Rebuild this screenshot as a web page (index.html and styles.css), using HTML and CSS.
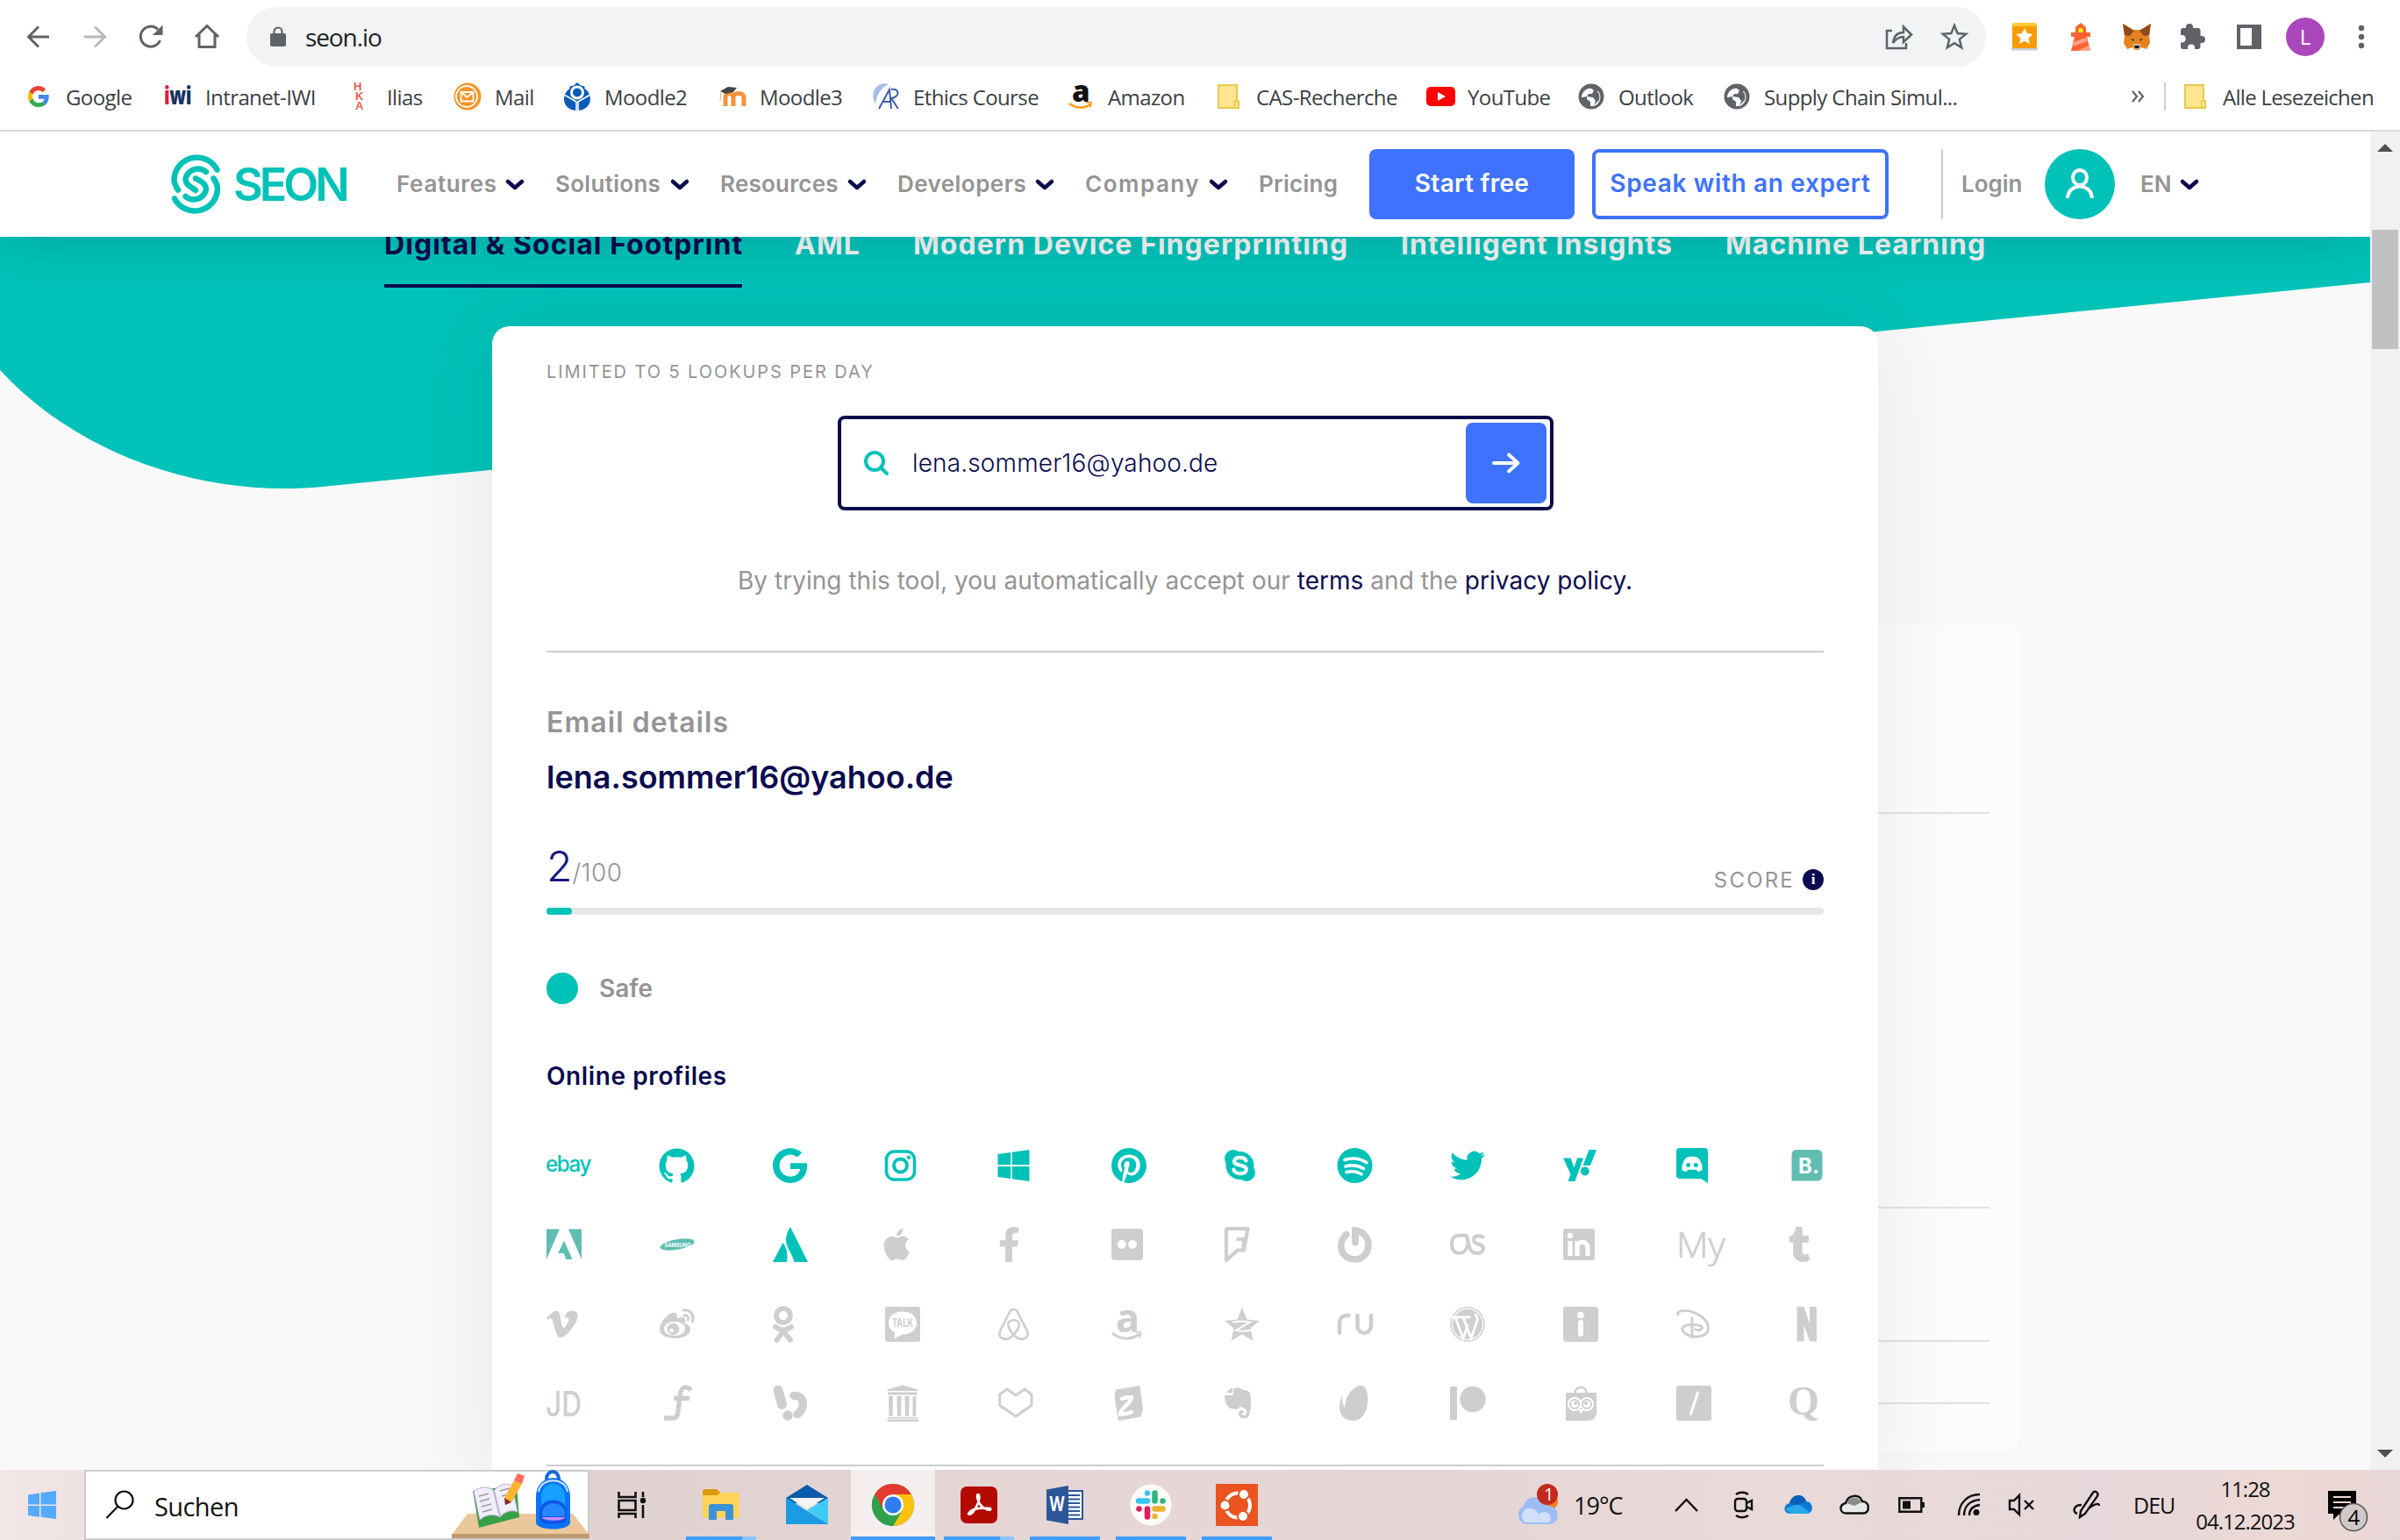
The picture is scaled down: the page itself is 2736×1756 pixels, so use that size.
FILE: index.html
```html
<!DOCTYPE html>
<html lang="de">
<head>
<meta charset="utf-8">
<title>SEON</title>
<link rel="stylesheet" href="styles.css">
</head>
<body>
<div class="toolbar">
  <svg class="ic" width="32" height="32" viewBox="0 0 32 32"><path d="M28 16H5M16 4.500 4.500 16 16 27.500" class="ln3"/></svg>
  <svg class="ic faded" width="32" height="32" viewBox="0 0 32 32"><path d="M4 16h23M16 4.500 27.500 16 16 27.500" class="ln3"/></svg>
  <svg class="ic" width="32" height="32" viewBox="0 0 32 32"><path d="M26.500 20A11.500 11.500 0 1 1 24 7.500" class="ln3"/><path d="M29.500 2.500V14H18z"/></svg>
  <svg class="ic" width="32" height="32" viewBox="0 0 32 32"><path d="M3 16 16 3.500 29 16M7 13v14.500h18V13" class="ln3"/></svg>
  <div class="omnibox">
    <svg width="18" height="24" viewBox="0 0 18 24" class="lock"><rect y="8" width="18" height="15" rx="2"/><path d="M4.500 9V6a4.500 4.500 0 0 1 9 0v3" fill="none" stroke="#5f6368" stroke-width="2.200"/></svg>
    <span class="url">seon.io</span>
    <svg class="share" width="32" height="32" viewBox="0 0 32 32"><path d="M8 9H2v20h22v-6" class="ln25"/><path d="M9 23c1-8 5-12 12-12V4.500l9 9-9 8.500v-6c-5 0-8 1.500-12 7z" class="ln25"/></svg>
    <svg width="32" height="32" viewBox="0 0 32 32"><path d="m16 3 3.600 9 9.600.7-7.400 6.200 2.400 9.400L16 23.200l-8.200 5.100 2.400-9.400-7.400-6.200 9.600-.7z" class="ln25"/></svg>
  </div>
  <div class="ext"><svg width="32" height="32" viewBox="0 0 32 32"><rect x="1" y="28" width="30" height="3.500" rx="1" fill="#c9ccd6"/><rect x="2" width="28" height="29" rx="3" fill="#f99b00"/><rect x="2" width="28" height="4" rx="2" fill="#ffc93c"/><path d="m16 6 2.900 6.100 6.600.8-4.900 4.600 1.300 6.500-5.900-3.200L10.100 24l1.300-6.500-4.900-4.600 6.600-.8z" fill="#fff"/></svg></div>
  <div class="ext"><svg width="32" height="32" viewBox="0 0 32 32"><path d="M10 11V5l6-5 6 5v6h5v5H5v-5zM9 16h14l4 16H5z" fill="#ff6333"/><path d="M13.500 6h5v5h-5z" fill="#fff200"/><path d="m8 22 14-5 1.500 4L7 27zm4 10 13-6 1.500 6z" fill="#ffa287"/></svg></div>
  <div class="ext"><svg width="34" height="32" viewBox="0 0 34 32"><path d="m1 1 12 7h8l12-7-2 14 1 8-4 7-6-2-3 3h-4l-3-3-6 2-4-7 1-8z" fill="#e8821e"/><path d="m1 1 13 8-5 6-6-1zM33 1 20 9l5 6 6-1z" fill="#8f4a1c"/><path d="m10 18 4 1-1 2zM24 18l-4 1 1 2z" fill="#233447"/><path d="m12 25 3 5h4l3-5-3-1h-4z" fill="#d5bfb2"/><path d="M14 26h6l-1 3h-4z" fill="#161616"/></svg></div>
  <div class="ext"><svg width="30" height="30" viewBox="0 0 30 30" class="ic"><path d="M25 14h-1.500V8a3 3 0 0 0-3-3H15V4a4 4 0 0 0-8 0v1H4a3 3 0 0 0-3 3v5h1.500a4 4 0 0 1 0 8.500H1V26a3 3 0 0 0 3 3h5v-1.500a4 4 0 0 1 8 0V29h3.500a3 3 0 0 0 3-3v-4H25a4 4 0 0 0 0-8z"/></svg></div>
  <div class="ext"><svg width="28" height="28" viewBox="0 0 28 28" class="ic"><path d="M0 0h28v28H0zM4 4v20h13V4z" fill-rule="evenodd"/></svg></div>
  <div class="ext"><span class="avatar">L</span></div>
  <div class="ext"><svg width="8" height="28" viewBox="0 0 8 28" class="ic"><circle cx="4" cy="4" r="3.200"/><circle cx="4" cy="14" r="3.200"/><circle cx="4" cy="24" r="3.200"/></svg></div>
</div>
<div class="bookmarks">
  <div class="bm"><svg width="32" height="32" viewBox="0 0 48 48"><path fill="#EA4335" d="M24 14c2.700 0 5.100.9 7 2.700l5.300-5.200C33 8.400 28.900 6 24 6c-7 0-13.100 4-16.100 9.900l6.100 4.700C15.500 17 19.400 14 24 14z"/><path fill="#4285F4" d="M41.500 24.400c0-1.200-.1-2.300-.3-3.400H24v7h9.900c-.4 2.100-1.700 4-3.600 5.300l5.900 4.600c3.400-3.200 5.300-7.900 5.300-13.500z"/><path fill="#FBBC05" d="M14 27.400a10.600 10.600 0 0 1 0-6.800l-6.100-4.700a18 18 0 0 0 0 16.200z"/><path fill="#34A853" d="M24 42c4.900 0 9-1.600 12.200-4.100l-5.900-4.600A11 11 0 0 1 14 27.400l-6.100 4.700A18 18 0 0 0 24 42z"/></svg><span>Google</span></div>
  <div class="bm"><svg width="32" height="32" viewBox="0 0 32 32"><text x="0" y="25" class="iwi" textLength="31" lengthAdjust="spacingAndGlyphs"><tspan fill="#e6173f">i</tspan><tspan fill="#17335f">wi</tspan></text></svg><span>Intranet-IWI</span></div>
  <div class="bm"><svg width="32" height="32" viewBox="0 0 32 32"><g class="hka"><text x="9" y="9">H</text><text x="11" y="20">K</text><text x="11" y="31">A</text></g></svg><span>Ilias</span></div>
  <div class="bm"><svg width="32" height="32" viewBox="0 0 32 32"><circle cx="16" cy="16" r="15.500" fill="#f59322"/><circle cx="15" cy="16" r="12" fill="none" stroke="#fff" stroke-width="1.800"/><path d="M8.500 11h14v10.500h-14zM8.500 11l7 6 7-6" fill="none" stroke="#fff" stroke-width="1.800"/></svg><span>Mail</span></div>
  <div class="bm"><svg width="32" height="32" viewBox="0 0 32 32"><path d="M16 0 20 3.500l4.500 1V7C35 14 33 32 16 32S-3 14 7.500 7V4.500l4.500-1z" fill="#0a5bb8"/><path d="M2 14.500 15 22v10M30 14.500 17 22v10" fill="none" stroke="#fff" stroke-width="1.600"/><circle cx="16" cy="11.500" r="6.500" fill="none" stroke="#fff" stroke-width="3"/></svg><span>Moodle2</span></div>
  <div class="bm"><svg width="32" height="32" viewBox="0 0 32 32"><path d="M8 27V17c0-6 9-6 9 0v10M17 17c0-6 12-6 12 0v10" fill="none" stroke="#f7923a" stroke-width="5"/><path d="m2 10 9-5 10 1-4 5-9 2z" fill="#444"/><path d="m3 10-1 11" stroke="#e0a98a" stroke-width="1"/></svg><span>Moodle3</span></div>
  <div class="bm"><svg width="32" height="32" viewBox="0 0 32 32"><path d="M4 24C-4 10 8-2 19 2 9 7 6 14 4 24z" fill="#a3bfe6"/><path d="M8 30 20 8l2 22M12 22h10M22 8c10-2 10 9 0 10l8 12" fill="none" stroke="#3c5da6" stroke-width="2"/></svg><span>Ethics Course</span></div>
  <div class="bm"><svg width="32" height="32" viewBox="0 0 32 32"><text x="6" y="22" class="ama">a</text><path d="M3 24c8 6 17 6 24 1" fill="none" stroke="#f90" stroke-width="2.500"/><path d="m22 23 6-.5-1 6" fill="none" stroke="#f90" stroke-width="1.500"/></svg><span>Amazon</span></div>
  <div class="bm"><svg width="32" height="32" viewBox="0 0 32 32"><path d="M4 3h21v18h2v8H4z" fill="#ffe591" stroke="#ebc84a" stroke-width="2"/><path d="M22.500 28v-7h3" fill="none" stroke="#ebc84a" stroke-width="1.500"/></svg><span>CAS-Recherche</span></div>
  <div class="bm"><svg width="34" height="32" viewBox="0 0 34 32"><rect y="5" width="33" height="22" rx="5" fill="#f00"/><path d="m13 11 9 5-9 5z" fill="#fff"/></svg><span class="yt">YouTube</span></div>
  <div class="bm"><svg width="32" height="32" viewBox="0 0 32 32"><circle cx="16" cy="16" r="14.500" fill="#5f6368"/><path d="M5 17c0-6 6-11 11-10l3 2-2 4h-4l-2 3 7 1 3 4-2 5 6-6c1-4 0-9-3-10l2 0c5 6 2 15-5 17h-4v-5l-4-3v-3z" fill="#fff"/></svg><span>Outlook</span></div>
  <div class="bm"><svg width="32" height="32" viewBox="0 0 32 32"><circle cx="16" cy="16" r="14.500" fill="#5f6368"/><path d="M5 17c0-6 6-11 11-10l3 2-2 4h-4l-2 3 7 1 3 4-2 5 6-6c1-4 0-9-3-10l2 0c5 6 2 15-5 17h-4v-5l-4-3v-3z" fill="#fff"/></svg><span>Supply Chain Simul...</span></div>
  <div class="more"><svg width="16" height="14" viewBox="0 0 16 14"><path d="m2 1 5 6-5 6M9 1l5 6-5 6" fill="none" stroke="#5f6368" stroke-width="2.200"/></svg></div>
  <div class="bm all"><svg width="32" height="32" viewBox="0 0 32 32"><path d="M4 3h21v18h2v8H4z" fill="#ffe591" stroke="#ebc84a" stroke-width="2"/><path d="M22.500 28v-7h3" fill="none" stroke="#ebc84a" stroke-width="1.500"/></svg><span>Alle Lesezeichen</span></div>
</div>
<div class="browser">
  <div class="page">
    <header class="nav">
      <div class="logo">
        <svg width="58" height="70" viewBox="0 0 58 70"><g fill="none" stroke="#00c2b8" stroke-width="6.500" stroke-linecap="round"><path d="M52.500 18.500A26 26 0 0 0 3.500 29c0 5 2 9 4.500 12.500"/><path d="M4 51.500A26 26 0 0 0 53 41c0-5-2-9-4.500-12.500"/><path d="M40 21A14.500 14.500 0 0 0 16.500 29c0 5 3 7.500 6.500 9.500L28 42"/><path d="M16.500 49A14.500 14.500 0 0 0 40 41c0-5-3-7.500-6.500-9.500L28 28.500"/></g></svg>
        <span>SEON</span>
      </div>
      <a class="menu m1">Features<svg width="22" height="13" viewBox="0 0 22 13"><path d="m3 3 8 7 8-7"/></svg></a>
      <a class="menu m2">Solutions<svg width="22" height="13" viewBox="0 0 22 13"><path d="m3 3 8 7 8-7"/></svg></a>
      <a class="menu m3">Resources<svg width="22" height="13" viewBox="0 0 22 13"><path d="m3 3 8 7 8-7"/></svg></a>
      <a class="menu m4">Developers<svg width="22" height="13" viewBox="0 0 22 13"><path d="m3 3 8 7 8-7"/></svg></a>
      <a class="menu m5">Company<svg width="22" height="13" viewBox="0 0 22 13"><path d="m3 3 8 7 8-7"/></svg></a>
      <a class="menu m6">Pricing</a>
      <a class="btn solid">Start free</a>
      <a class="btn outline">Speak with an expert</a>
      <i class="sep"></i>
      <a class="menu login">Login</a>
      <span class="user"><svg width="34" height="36" viewBox="0 0 34 36"><g fill="none" stroke="#fff" stroke-width="4"><ellipse cx="17" cy="10.500" rx="8" ry="8.500"/><path d="M3 34c1-18 27-18 28 0"/></g></svg></span>
      <a class="menu lang">EN<svg width="22" height="13" viewBox="0 0 22 13"><path d="m3 3 8 7 8-7"/></svg></a>
    </header>
    <main class="stage">
      <svg class="wave" width="2702" height="300" viewBox="0 0 2702 300"><path d="M0 0H2702V52L367 285C235 298 90 250 0 152z" fill="#00c2b8"/></svg>
      <div class="ghost"><i></i><i></i><i></i><i></i></div>
      <nav class="tabs"><a class="on">Digital &amp; Social Footprint</a><a class="t2">AML</a><a class="t3">Modern Device Fingerprinting</a><a class="t4">Intelligent Insights</a><a class="t5">Machine Learning</a></nav>
      <section class="card">
        <p class="limit">LIMITED TO 5 LOOKUPS PER DAY</p>
        <div class="field">
          <svg width="28" height="28" viewBox="0 0 28 28"><g fill="none" stroke="#00c2b8" stroke-width="4" stroke-linecap="round"><circle cx="12" cy="12" r="10"/><path d="m19.500 19.500 6.500 6.500"/></g></svg>
          <span>lena.sommer16@yahoo.de</span>
          <b class="go"><svg width="32" height="24" viewBox="0 0 32 24"><path d="M2 12h27M19 2.500 29.500 12 19 21.500" fill="none" stroke="#fff" stroke-width="3.800" stroke-linecap="round" stroke-linejoin="round"/></svg></b>
        </div>
        <p class="terms">By trying this tool, you automatically accept our <a>terms</a> and the <a>privacy policy.</a></p>
        <div class="rule"></div>
        <h2>Email details</h2>
        <p class="mail">lena.sommer16@yahoo.de</p>
        <div class="score"><p><b>2</b><span>/100</span></p><div class="lbl">SCORE<i>i</i></div></div>
        <div class="bar"><div class="fill" style="width:2%"></div></div>
        <div class="safe"><i></i><span>Safe</span></div>
        <h3>Online profiles</h3>
        <div class="profiles">
          <!-- row 1 -->
          <svg class="a"><text x="-1" y="31" class="eb" textLength="51" lengthAdjust="spacingAndGlyphs">ebay</text></svg>
          <svg class="a"><g transform="translate(-.5 4) scale(1.667)"><path d="M12 .297c-6.630 0-12 5.373-12 12 0 5.303 3.438 9.800 8.205 11.385.6.113.82-.258.82-.577 0-.285-.01-1.040-.015-2.040-3.338.724-4.042-1.610-4.042-1.610C4.422 18.070 3.633 17.700 3.633 17.700c-1.087-.744.084-.729.084-.729 1.205.084 1.838 1.236 1.838 1.236 1.070 1.835 2.809 1.305 3.495.998.108-.776.417-1.305.76-1.605-2.665-.3-5.466-1.332-5.466-5.930 0-1.310.465-2.380 1.235-3.220-.135-.303-.54-1.523.105-3.176 0 0 1.005-.322 3.300 1.230.96-.267 1.980-.399 3-.405 1.020.006 2.040.138 3 .405 2.280-1.552 3.285-1.230 3.285-1.230.645 1.653.24 2.873.12 3.176.765.84 1.230 1.910 1.230 3.220 0 4.610-2.805 5.625-5.475 5.920.42.36.81 1.096.81 2.220 0 1.606-.015 2.896-.015 3.286 0 .315.21.69.825.57C20.565 22.092 24 17.592 24 12.297c0-6.627-5.373-12-12-12"/></g></svg>
          <svg class="a"><g transform="translate(0 3.500) scale(.0803)"><path d="M488 261.800C488 403.300 391.100 504 248 504 110.800 504 0 393.200 0 256S110.800 8 248 8c66.800 0 123 24.500 166.300 64.900l-67.500 64.900C258.500 52.600 94.300 116.600 94.300 256c0 86.500 69.100 156.600 153.700 156.600 98.200 0 135-70.400 140.800-106.900H248v-85.300h236.100c2.300 12.700 3.900 24.900 3.900 41.400z"/></g></svg>
          <svg class="a"><rect x="1.500" y="8" width="32" height="32" rx="9" class="s" stroke-width="3.500"/><circle cx="17.500" cy="24" r="7.500" class="s" stroke-width="3.800"/><circle cx="27" cy="14.700" r="2.200"/></svg>
          <svg class="a"><g transform="translate(-.5 3.500) scale(.0803)"><path d="M0 93.700l183.600-25.300v177.400H0V93.700zm0 324.600l183.600 25.300V268.400H0v149.900zm203.800 28L448 480V268.400H203.800v177.900zm0-380.600v180.100H448V32L203.800 65.700z"/></g></svg>
          <svg class="a"><g transform="translate(0 4) scale(1.667)"><path d="M12.017 0C5.396 0 .029 5.367.029 11.987c0 5.079 3.158 9.417 7.618 11.162-.105-.949-.199-2.403.041-3.439.219-.937 1.406-5.957 1.406-5.957s-.359-.72-.359-1.781c0-1.663.967-2.911 2.168-2.911 1.024 0 1.518.769 1.518 1.688 0 1.029-.653 2.567-.992 3.992-.285 1.193.6 2.165 1.775 2.165 2.128 0 3.768-2.245 3.768-5.487 0-2.861-2.063-4.869-5.008-4.869-3.410 0-5.409 2.562-5.409 5.199 0 1.033.394 2.143.889 2.741.099.12.112.225.085.345-.09.375-.293 1.199-.334 1.363-.053.225-.172.271-.401.165-1.495-.69-2.433-2.878-2.433-4.646 0-3.776 2.748-7.252 7.920-7.252 4.158 0 7.392 2.967 7.392 6.923 0 4.135-2.607 7.462-6.233 7.462-1.214 0-2.354-.629-2.758-1.379l-.749 2.848c-.269 1.045-1.004 2.352-1.498 3.146 1.123.345 2.306.535 3.550.535 6.607 0 11.985-5.365 11.985-11.987C23.970 5.390 18.592.026 11.985.026z"/></g></svg>
          <svg class="a"><circle cx="17.500" cy="24" r="16"/><circle cx="10" cy="16" r="10"/><circle cx="25" cy="32" r="10"/><path d="M24.500 18.500c-1-4.500-13-5.500-13.500.5-.3 6 14 3.500 13.800 9.500-.3 6.500-13.300 6-14.300 0" class="w" stroke-width="4.200"/></svg>
          <svg class="a"><circle cx="19.500" cy="24" r="20"/><path d="M8 17.500c8-2.500 17-1.800 25 3M9 25c7-2 14-1.200 20.500 2.500M10 31.500c6-1.500 12-.8 17 2.300" class="w" stroke-width="3.600"/></svg>
          <svg class="a"><g transform="translate(0 4) scale(1.667)"><path d="M23.953 4.570a10 10 0 01-2.825.775 4.958 4.958 0 002.163-2.723c-.951.555-2.005.959-3.127 1.184a4.920 4.920 0 00-8.384 4.482C7.690 8.095 4.067 6.130 1.640 3.162a4.822 4.822 0 00-.666 2.475c0 1.710.87 3.213 2.188 4.096a4.904 4.904 0 01-2.228-.616v.06a4.923 4.923 0 003.946 4.827 4.996 4.996 0 01-2.212.085 4.936 4.936 0 004.604 3.417 9.867 9.867 0 01-6.102 2.105c-.39 0-.779-.023-1.170-.067a13.995 13.995 0 007.557 2.209c9.053 0 13.998-7.496 13.998-13.985 0-.21 0-.42-.015-.63A9.935 9.935 0 0024 4.590z"/></g></svg>
          <svg class="a"><path d="M0 15.500h8.500l4 11 3.500-11h7L13.500 42H5.500l3-8zM29.500 6H38l-7 18h-8.500z"/><circle cx="24.800" cy="30.500" r="4.900"/></svg>
          <svg class="a"><path d="M4 4h28a4 4 0 0 1 4 4v36l-8-5H4a4 4 0 0 1-4-4V8a4 4 0 0 1 4-4z"/><path d="M10.500 15.500c5-2.500 10-2.500 15 0 3 4 4.500 9 4 13.500-2 1.500-4 2-5 2l-1.500-2.300h-10L11.500 31c-1.500 0-3.500-.5-5-2-.5-4.500 1-9.500 4-13.500z" fill="#fff"/><circle cx="13.700" cy="23.500" r="2.500"/><circle cx="22.300" cy="23.500" r="2.500"/></svg>
          <svg class="b"><path d="M7.500 6H32a5.500 5.500 0 0 1 5.500 5.500V36a5.500 5.500 0 0 1-5.500 5.500H2.500v-30A5.500 5.500 0 0 1 7.500 6z"/><text x="10" y="32.500" class="bk">B.</text></svg>
          <!-- row 2 -->
          <svg class="b"><path d="M0 6.500h15L0 41zM25 6.500h15V41zM20 19.500 29.500 41h-7l-2.800-7h-6.500z"/></svg>
          <svg class="b"><ellipse cx="20" cy="24" rx="19.800" ry="5.800" transform="rotate(-10 20 24)"/><text x="5.500" y="26.500" class="sm" textLength="30" lengthAdjust="spacingAndGlyphs">SAMSUNG</text></svg>
          <svg class="a"><path d="M11.500 22C16 28 17.500 36 16 44H0zM20 4 40 44H24.500C23 36 14 26 15 17c.5-5 2.500-9 5-13z"/></svg>
          <svg><g transform="translate(-4.700 6) scale(1.500)"><path d="M12.152 6.896c-.948 0-2.415-1.078-3.960-1.040-2.040.027-3.910 1.183-4.961 3.014-2.117 3.675-.546 9.103 1.519 12.090 1.013 1.454 2.208 3.090 3.792 3.039 1.520-.065 2.090-.987 3.935-.987 1.831 0 2.350.987 3.960.948 1.637-.026 2.676-1.480 3.676-2.948 1.156-1.688 1.636-3.325 1.662-3.415-.039-.013-3.182-1.221-3.220-4.857-.026-3.040 2.480-4.494 2.597-4.559-1.429-2.090-3.623-2.324-4.390-2.376-2-.156-3.675 1.090-4.610 1.090zM15.530 3.830c.843-1.012 1.400-2.427 1.245-3.830-1.207.052-2.662.805-3.532 1.818-.78.896-1.454 2.338-1.273 3.714 1.338.104 2.715-.688 3.559-1.701"/></g></svg>
          <svg><g transform="translate(0 4) scale(.078)"><path d="M279.140 288l14.220-92.660h-88.910v-60.130c0-25.350 12.420-50.060 52.240-50.060h40.420V6.260S260.430 0 225.360 0c-73.220 0-121.080 44.380-121.080 124.720v70.620H22.890V288h81.390v224h100.170V288z"/></g></svg>
          <svg><rect y="6" width="36" height="36" rx="4"/><circle cx="11.700" cy="24" r="5" fill="#fff"/><circle cx="24" cy="24" r="5" fill="#fff"/></svg>
          <svg><path d="M3.500 6H26.500l-4.500 24.500h-7L2 42V7.500A1.500 1.500 0 0 1 3.500 6zM24 18H13.500M22.500 18 21 30" class="s" stroke-width="4.200" stroke-linejoin="round"/></svg>
          <svg><path d="M10 12.500C-2 24 4.500 41 20 41c18 0 22-30 0-33v12" class="s" stroke-width="7.500" stroke-linecap="round"/><path d="M20 8v14" class="s" stroke-width="7.500" stroke-linecap="round"/></svg>
          <svg><path d="M20 15.500c-1-2-3-2-8-2C4 13.500 2 18 2 24s3 10 9 10 8-4 9-10M19 15c2 6 2 13 6 17 3 3 13 3 13-3.500s-11-3.500-11-9.500 9-6 11.500-2" class="s" stroke-width="4"/></svg>
          <svg><path d="M2.500 6h31A2.500 2.500 0 0 1 36 8.500v31a2.500 2.500 0 0 1-2.500 2.500h-31A2.500 2.500 0 0 1 0 39.500v-31A2.500 2.500 0 0 1 2.500 6z"/><path d="M8 20v17M16 37V20M16 37v-9c0-9 12-9 12 0v9" fill="none" stroke="#fff" stroke-width="5.200"/><circle cx="8" cy="14" r="3.200" fill="#fff"/></svg>
          <svg><text x="0" y="38.500" class="my" textLength="56" lengthAdjust="spacingAndGlyphs">My</text></svg>
          <svg><g transform="translate(-1 4) scale(.078)"><path d="M309.800 480.300c-13.600 14.500-50 31.700-97.400 31.700-120.800 0-147-88.800-147-140.600v-144H17.900c-5.500 0-10-4.500-10-10v-68c0-7.200 4.500-13.600 11.300-16 62-21.800 81.500-76 84.300-117.100.8-11 6.500-16.300 16.100-16.300h70.900c5.500 0 10 4.500 10 10v115.200h83c5.500 0 10 4.400 10 9.900v81.700c0 5.500-4.500 10-10 10h-83.400V360c0 34.200 23.700 53.600 68 35.800 4.800-1.900 9-3.200 12.700-2.200 3.500.9 5.800 3.400 7.400 7.900l22 64.300c1.800 5 3.300 10.600-.4 14.500z"/></g></svg>
          <!-- row 3 -->
          <svg><g transform="translate(0 6) scale(1.480)"><path d="M23.977 6.416c-.105 2.338-1.739 5.543-4.894 9.609-3.268 4.247-6.026 6.370-8.290 6.370-1.409 0-2.578-1.294-3.553-3.881L5.322 11.400C4.603 8.816 3.834 7.522 3.010 7.522c-.179 0-.806.378-1.881 1.132L0 7.197a315.065 315.065 0 003.501-3.128C5.080 2.701 6.266 1.984 7.055 1.910c1.867-.18 3.016 1.100 3.447 3.838.465 2.953.789 4.789.971 5.507.539 2.450 1.131 3.674 1.776 3.674.502 0 1.256-.796 2.265-2.385 1.004-1.589 1.540-2.797 1.612-3.628.144-1.371-.395-2.061-1.614-2.061-.574 0-1.167.121-1.777.391 1.186-3.868 3.434-5.757 6.762-5.637 2.473.06 3.628 1.664 3.493 4.797l-.013.01z"/></g></svg>
          <svg><path d="M0 30C0 21 11 9.500 17.500 11c3 1 2.500 4 2 6.500 4-2 10-2.500 10 2-.2 1.500-.8 2.500-.8 3.500C32 24 35 26 35 29.500 35 36 27 40 17.500 40S0 36 0 30z"/><ellipse cx="17" cy="29" rx="12" ry="8" fill="#fff"/><circle cx="15.500" cy="29.500" r="6.800"/><circle cx="13.500" cy="31" r="2.300" fill="#fff"/><path d="M27 8c7-1.500 13 5 10.500 13M28 14c3-.5 5.500 2 4.500 5" class="s" stroke-width="3.200" stroke-linecap="round"/></svg>
          <svg><circle cx="12" cy="14" r="8" class="s" stroke-width="5.600"/><path d="M3 27c6 4.500 12 4.500 18 0M12 31v2M12 32 4.500 42M12 32l8 10" class="s" stroke-width="5.800" stroke-linecap="round"/></svg>
          <svg><rect y="4" width="40" height="40" rx="3"/><path d="M20 9.500c10 0 16 5.500 16 13s-6 13-16 13l-10 5 1.500-7C6 31 4 27 4 22.500c0-7.500 6-13 16-13z" fill="#fff"/><text x="8" y="27" class="tk" textLength="24" lengthAdjust="spacingAndGlyphs">TALK</text></svg>
          <svg><path d="M17.500 36c-5-5.500-7-9-6-13 1.500-5 10.500-5 12 0 1 4-1 7.500-6 13-8 9-19 4-15.500-4L13 10c2-4 7-4 9 0l11 22c3.500 8-7.500 13-15.500 4z" class="s" stroke-width="2.700"/></svg>
          <svg><text x="5" y="32.500" class="am">a</text><path d="M1 34c10 8 22 8 31 1" class="s" stroke-width="3"/><path d="M28 33.500c6-2 7 0 4 6" class="s" stroke-width="1.800"/></svg>
          <svg><path d="m20 5 5.500 13.500L40 20 29.500 28.500 32.500 43 20 35.500 7.500 43l3-14.500L0 20l14.500-1.500z"/><path d="M10 21.500c7-1 13-.8 19 0L13 31c6 1 12 1 18-.5" class="w" stroke-width="2"/></svg>
          <svg><path d="M2 34V23c0-7 4-9 10.500-9.200M22.500 14v11c0 12 15.500 12 15.500 0V14" class="s" stroke-width="4.400" stroke-linecap="round"/></svg>
          <svg><circle cx="20" cy="24" r="19" class="s" stroke-width="1.500"/><circle cx="20" cy="24" r="17"/><path d="m6 16 9 24 5-14M15 16l9 24 7-20c1-3-1-5-2-7M3 16h7M12.500 16h10" class="w" stroke-width="2.800"/></svg>
          <svg><rect y="4" width="40" height="40" rx="3"/><circle cx="20" cy="13.500" r="3.800" fill="#fff"/><path d="M20 22v13" class="w" stroke-width="6" stroke-linecap="round"/></svg>
          <svg><path d="M2 13C-1 8 15 6 27 14c12 8 14 22-2 24-10 1.500-22-6-17-11 5-4 22-3 21.500 1-.5 3-6 3-8 2M18 17v22" class="s" stroke-width="2.900" stroke-linecap="round"/></svg>
          <svg><path d="M8.500 4h8l6.500 19V4h8v40l-8-1-6.500-18v18l-8 1z"/></svg>
          <!-- row 4 -->
          <svg><text x="-1" y="38.500" class="jd" textLength="41" lengthAdjust="spacingAndGlyphs">JD</text></svg>
          <svg><path d="M36 9c-7-6-12-3-13 7l-2 17c-1 7-2 8-8 8H5M16 18.500h18" class="s" stroke-width="5.400"/></svg>
          <svg><path d="m6 9 4.500 16.500" class="s" stroke-width="11" stroke-linecap="round"/><circle cx="17" cy="38" r="5.700"/><path d="M24 15.500c13-1 13 15 4 21" class="s" stroke-width="9.500" stroke-linecap="round"/></svg>
          <svg><path d="m20 3.500 17.500 5v1.500h-35V8.500zM3 11.500h33.500v3H3zM4 16h5l-.5 23h-4zM13.500 16h5L18 39h-4zM22.500 16h5L27 39h-4zM31.500 16h4L35 39h-3.500zM3 40h34v1.500H3zM2.500 42.500H38V45H2.500z"/></svg>
          <svg><path d="M1.700 14 10 8l10 7 10-7 8 6v12.500L20 39 1.700 26.500z" class="s" stroke-width="3"/></svg>
          <svg><path d="M5 8.500 32.500 4 36 31l-2.500 8.500L8 44 3.500 17z"/><path d="M12 19c5-2 8-2 11-1.500 0 6-13 12-13 19 5 0 8 0 13-2.500" class="w" stroke-width="4.500"/></svg>
          <svg><path d="M10 8c1-3 10-2 10 1 6 0 8 1 9 4 2 8 1 20-1 25-2 5-12 4-12-2 0-5 7-5 6-1-3-1-3 3 0 3 4 0 4-7 1-8-3 0-5-3-6-2 0 4-6 3-10 2C1 27 0 20 0 15h10z"/><path d="M1 12 9 6v6z"/></svg>
          <svg><path d="M27 4C38 3.500 38 44 18 44 1 44-1 27 5.500 15c-.5 6-.5 10 3 14C8 17 16 5 27 4z"/></svg>
          <svg><path d="M0 5h8v38H0z"/><circle cx="26" cy="19.500" r="14.700"/></svg>
          <svg><path d="M3 12h35v22c0 6-4 10-10 10H3z"/><path d="M13.500 12c0-8 13-8 13 0" class="s" stroke-width="2.500"/><g fill="#cecece" stroke="#fff" stroke-width="2"><circle cx="13" cy="25" r="7"/><circle cx="27" cy="25" r="7"/></g><path d="m17 31 3.500 5 3.500-5z" fill="#fff"/><circle cx="13" cy="25" r="4" fill="#fff"/><circle cx="27" cy="25" r="4" fill="#fff"/><circle cx="14" cy="24" r="2"/><circle cx="26" cy="24" r="2"/></svg>
          <svg><rect y="4" width="40" height="40" rx="3"/><path d="m24.500 12-8 24" class="w" stroke-width="3"/></svg>
          <svg><text x="-2" y="37" class="qu">Q</text></svg>
        </div>
        <div class="rule last"></div>
      </section>
    </main>
  </div>
  <div class="scroll"><svg width="18" height="9" viewBox="0 0 18 9"><path d="M0 9 9 0l9 9z" fill="#505050"/></svg><div class="thumb"></div><svg width="18" height="9" viewBox="0 0 18 9"><path d="M0 0l9 9 9-9z" fill="#505050"/></svg></div>
</div>
<footer class="taskbar">
  <div class="start"><svg width="32" height="32" viewBox="0 0 32 32"><path d="M0 4.500 13 2.500v13H0zM14.500 2.300 32 0v15.500H14.500zM0 17h13v12.700L0 28zM14.500 17H32v15l-17.500-2.300z" fill="#55a9ff"/></svg></div>
  <div class="search">
    <svg width="34" height="34" viewBox="0 0 34 34"><circle cx="21.500" cy="11.500" r="10" fill="none" stroke="#111" stroke-width="2.200"/><path d="M14.500 18.500 1.500 32" stroke="#111" stroke-width="2.200"/></svg>
    <span>Suchen</span>
    <svg class="art" width="157" height="76" viewBox="0 0 157 76"><path d="M18 48h120l19 24H0z" fill="#ecc79b"/><path d="M0 71h157v5H0z" fill="#bd9a70"/><path d="m24 22 50-6 3 36-46 12z" fill="#38a048"/><path d="M25 22c8-5 17-6 23 0 5-7 14-10 21-6l6 30c-8-3-15 0-20 6-7-4-16-3-23 3z" fill="#f1edfb" stroke="#b9afd8" stroke-width="1"/><path d="m48 22 7 29" stroke="#b9afd8" stroke-width="2"/><path d="m31 28 11-3m-10 9 11-3m-9 9 11-3m-10 9 11-3m9-21 11-3m-9 9 11-3" stroke="#9a9aa8" stroke-width="1.600"/><path d="m60 30 11-20 9 4-12 21-7 3z" fill="#ffb52e"/><path d="m71 10 4-8 8 3-3 9z" fill="#ff6b5b"/><path d="m60 30 8 5-7 3z" fill="#7a2c38"/><path d="M108 9c0-12 14-12 14 0" fill="none" stroke="#1668d8" stroke-width="4"/><path d="M96 29c0-29 39-29 39 0v29c0 10-39 10-39 0z" fill="#0b74f5"/><path d="M102 29c0-20 27-20 27 0v27h-27z" fill="#16a0ff"/><path d="M99 23c3-17 30-17 33 0" fill="none" stroke="#cfe3ff" stroke-width="2"/><path d="M100 46c0-18 31-18 31 0v8c0 8-31 8-31 0z" fill="#1056e8"/><path d="M103 46c3-13 23-13 26 0v5h-26z" fill="#2487ff"/><path d="M103 52h26c0 5-26 5-26 0z" fill="#c38bff"/></svg>
  </div>
  <div class="tv"><svg width="32" height="32" viewBox="0 0 32 32"><path d="M1.500 1v6h19V1M1.500 31v-5h19v5M1.500 11h19v11h-19zM29 1v6M29 16v15" fill="none" stroke="#111" stroke-width="2.600"/><circle cx="29" cy="11" r="3.200" fill="#111"/></svg></div>
  <div class="apps">
    <div class="app two"><svg width="44" height="36" viewBox="0 0 44 36"><path d="M1 3a3 3 0 0 1 3-3h13l4 4h20a2 2 0 0 1 2 2v27H1z" fill="#ffd35a"/><path d="M1 7V3a3 3 0 0 1 3-3h13l4 4-3 3z" fill="#dd9a08"/><path d="M8 20a3 3 0 0 1 3-3h22a3 3 0 0 1 3 3v15h-9V25H17v10H8z" fill="#3b92d8"/></svg></div>
    <div class="app none"><svg width="48" height="46" viewBox="0 0 48 46"><path d="m0 15 24-15 24 15v6H0z" fill="#0b5aab"/><path d="M0 15v30h48z" fill="#1fa0e6"/><path d="M48 15v30L24 29z" fill="#3ecbf4"/><path d="M0 15 48 45H0z" fill="#1a9be3"/><path d="M4 15h40L24 28z" fill="#f3f3f3"/></svg></div>
    <div class="app active"><svg width="48" height="48" viewBox="0 0 48 48"><circle cx="24" cy="24" r="24" fill="#2fa04c"/><path d="M24 24 3.200 12A24 24 0 0 1 44.800 12z" fill="#e33b2e"/><path d="M24 12h20.800A24 24 0 0 1 24 48l10.400-18z" fill="#fdc10f"/><path d="M3.200 12 13.600 30 24 12z" fill="#e33b2e"/><path d="M3.200 12 13.600 30 34.400 30 24 48A24 24 0 0 1 3.200 12z" fill="#2fa04c"/><circle cx="24" cy="24" r="12" fill="#fff"/><circle cx="24" cy="24" r="9.500" fill="#2d7cf0"/></svg></div>
    <div class="app two"><svg width="42" height="42" viewBox="0 0 42 42"><rect width="42" height="42" rx="7" fill="#b30b00"/><path d="M9 31c3-6 14-7 25-6 2 4-8 1-12-5-3-5-4-11-2-11s2 6-1 12c-2 5-7 13-10 10z" fill="none" stroke="#fff" stroke-width="2.600"/></svg></div>
    <div class="app"><svg width="42" height="44" viewBox="0 0 42 44"><path d="M22 6h19v32H22z" fill="#fff" stroke="#2b579a" stroke-width="2"/><path d="M25 11h13M25 15.500h13M25 20h13M25 24.500h13M25 29h13M25 33.500h13" stroke="#2b579a" stroke-width="2"/><path d="M0 4.500 25 0v44L0 39.500z" fill="#2b579a"/><text x="3.500" y="29" class="wd" textLength="17" lengthAdjust="spacingAndGlyphs">W</text></svg></div>
    <div class="app"><svg width="48" height="48" viewBox="0 0 48 48"><circle cx="24" cy="24" r="23.500" fill="#fbfbfb"/><g stroke-width="6.500" stroke-linecap="round"><path d="M10 19.500h10M20 10.500v0" stroke="#36c5f0"/><path d="M28.500 10.500v9M37.500 19.500v0" stroke="#2eb67d"/><path d="M28.500 28.500h9M28.500 37v0" stroke="#ecb22e"/><path d="M20 28.500v9M10.500 28.500v0" stroke="#e01e5a"/></g></svg></div>
    <div class="app"><svg width="48" height="48" viewBox="0 0 48 48"><path d="M0 0h48v48H0z" fill="#e95420"/><circle cx="25" cy="24.500" r="14" fill="none" stroke="#fff" stroke-width="4"/><g fill="#fff" stroke="#e95420" stroke-width="2"><circle cx="10.500" cy="24.500" r="6"/><circle cx="32" cy="12" r="6"/><circle cx="31" cy="37" r="6"/></g></svg></div>
  </div>
  <div class="tray">
    <div><svg width="50" height="48" viewBox="0 0 50 48"><circle cx="37" cy="20" r="11" fill="#f58220"/><path d="M11 46a11.500 11.500 0 0 1-2-21c2-13 23-13 27 0 15-1 16 21 2 21z" fill="#9dbdf6"/><path d="M11 44a9 9 0 0 1 0-15c8-4 14 2 15 6 6-6 14-2 14 4 0 3-2 5-4 5z" fill="#d0e0fa"/><circle cx="36" cy="12" r="12" fill="#c4291c"/><text x="32" y="19" class="one">1</text></svg></div>
    <div class="tx">19°C</div>
    <div><svg width="28" height="16" viewBox="0 0 28 16"><path d="m1 15 12.500-13L26 15" class="k"/></svg></div>
    <div><svg width="24" height="32" viewBox="0 0 24 32"><rect x="2" y="9" width="13" height="14" rx="3" class="k"/><path d="m15 14 6-3v10l-6-3M3 4c4-3 10-3 14 0M3 28c4 3 10 3 14 0" class="k"/></svg></div>
    <div><svg width="32" height="22" viewBox="0 0 32 22"><path d="M7 21C-1 21-2 11 6 9 9-2 22-3 25 7c9 0 9 14 1 14z" fill="#0f78d4"/><path d="m1 15 15-5 14 10-4 1H7z" fill="#28a8ea"/><path d="M6 9C9-2 22-3 25 7l-9 4z" fill="#0a60b8"/></svg></div>
    <div><svg width="34" height="22" viewBox="0 0 34 22"><path d="M8 20.500C0 20.500-1 11 7 9 10-1 23-2 26 7c9 0 9 13.500 1 13.500z" fill="#e9e9e9" stroke="#111" stroke-width="2.400"/><path d="M8 9c3-8 14-8 17-1l-8 4z" fill="#8a8a8a"/></svg></div>
    <div><svg width="30" height="18" viewBox="0 0 30 18"><path d="M1.300 1.300h25v15.400h-25z" class="k"/><path d="M5 4.500h9v9H5zM27 6h3v6h-3z" fill="#111"/></svg></div>
    <div><svg width="26" height="26" viewBox="0 0 26 26"><path d="M1 25C1 11 11 1 25 1M7 25C7 14 14 8 25 7M13 25c0-7 5-11 12-12" class="k"/><circle cx="21" cy="21.500" r="3.500" fill="#111"/></svg></div>
    <div><svg width="30" height="26" viewBox="0 0 30 26"><path d="M1 8h5l6-6v22l-6-6H1zM18 8l10 10M28 8 18 18" class="k"/></svg></div>
    <div><svg width="34" height="34" viewBox="0 0 34 34"><path d="M10 24 24 3c2-3 7 0 5 4L15 27l-6 4zM11 17c-9 0-11 8-5 10M19 21c4-3 12-8 12-3" class="k"/></svg></div>
    <div class="tx deu">DEU</div>
    <div class="clock"><span class="hm">11:28</span><span>04.12.2023</span></div>
    <div class="note"><svg width="46" height="50" viewBox="0 0 46 50"><path d="M0 0h32v27H12l-6 6v-7H0z" fill="#000"/><path d="M6 7h20M6 13h20M6 19h20" stroke="#ecd9d8" stroke-width="2"/><circle cx="29" cy="30" r="15.500" fill="#cfcac9" stroke="#555" stroke-width="1.500"/><text x="22.500" y="38.500" class="four">4</text></svg></div>
  </div>
</footer>
</body>
</html>
```
FILE: styles.css
```css
* { box-sizing: border-box; margin: 0; padding: 0; }
body {
  width: 2736px; height: 1756px; overflow: hidden; background: #fff;
  font-family: Inter, "Liberation Sans", sans-serif;
  display: flex; flex-direction: column;
}
svg { display: block; flex: none; overflow: visible; }
.ic { fill: #5f6368; }
.ln3 { fill: none; stroke: #5f6368; stroke-width: 3; }
.ln25 { fill: none; stroke: #5f6368; stroke-width: 2.5; }
.faded { opacity: .45; }

/* browser toolbar */
.toolbar {
  height: 84px; padding-left: 28px; display: grid; align-items: center;
  grid-template-columns: 64px 64px 64px 61px 1983px 12px repeat(7, 64px);
}
.omnibox {
  grid-column: 5 / 6; height: 68px; border-radius: 34px; background: #f1f3f4;
  display: flex; align-items: center; padding: 0 20px 0 27px;
}
.lock { fill: #5f6368; }
.url { margin-left: 22px; font: 28px "Open Sans", sans-serif; letter-spacing: -1.1px; color: #202124; }
.share { margin-left: auto; margin-right: 31px; }
.ext { display: flex; justify-content: center; }
.ext:nth-child(6) { grid-column: 7; }
.avatar {
  width: 44px; height: 44px; border-radius: 50%; background: #ab47bc; color: #fff;
  font: 24px/44px "Open Sans", sans-serif; text-align: center;
}

/* bookmarks bar */
.bookmarks {
  height: 66px; padding: 0 0 12px 28px; border-bottom: 2px solid #dadada; display: grid; align-items: center;
  grid-template-columns: 159px 207px 123px 125px 177px 175px 222px 169px 241px 172px 166px 465px 38px 1fr;
  font-family: "Open Sans", sans-serif; font-size: 24px; letter-spacing: -.6px; color: #3c4043;
}
.bm { display: flex; align-items: center; gap: 16px; white-space: nowrap; }
.bm span { margin-left: -1px; padding-top: 1px; }
.bm .yt { margin-left: -3px; }
.more { padding-bottom: 0; }
.all { border-left: 2px solid #d0d0d0; height: 32px; padding-left: 18px; letter-spacing: -.7px; }
.iwi { font: 800 29px "Open Sans", sans-serif; }
.hka { font: 700 13px "Liberation Sans", sans-serif; fill: #e8604c; letter-spacing: 0; }
.ama { font: 800 33px "Open Sans", sans-serif; fill: #111; }

/* page area */
.browser { display: flex; height: 1526px; }
.page { width: 2702px; overflow: hidden; background: #f9f9f9; }
.nav {
  position: relative; z-index: 2; height: 120px; padding-left: 195px; background: #fff; display: grid; align-items: center;
  grid-template-columns: 257px 181px 188px 202px 214px 198px 126px 254px 398px 23px 95px 109px 67px;
  box-shadow: 0 0 60px rgba(0, 0, 0, .16);
}
.logo { display: flex; align-items: center; gap: 13px; color: #00c2b8; font-size: 52px; font-weight: 600; letter-spacing: -4px; }
.menu { display: flex; align-items: center; padding: 0 35px 2px 0; font-size: 26px; font-weight: 600; color: #949494; white-space: nowrap; }
.menu svg { margin-left: auto; position: relative; top: 1px; fill: none; stroke: #0b0b4f; stroke-width: 4.5; stroke-linecap: round; stroke-linejoin: round; }
.m1 { letter-spacing: .65px; }
.m2 { letter-spacing: .3px; }
.m3 { letter-spacing: .25px; }
.m4 { letter-spacing: .45px; }
.m5 { letter-spacing: 1.5px; }
.m6 { letter-spacing: .3px; }
.m6, .login, .lang { padding-right: 0; }
.btn { height: 80px; border-radius: 8px; display: flex; align-items: center; justify-content: center; font-size: 28px; font-weight: 600; white-space: nowrap; }
.solid { width: 234px; background: #3e72ff; color: #fff; padding-bottom: 2px; letter-spacing: .3px; }
.outline { width: 338px; border: 4px solid #3e72ff; color: #3e72ff; padding-bottom: 2px; letter-spacing: .65px; }
.sep { width: 2px; height: 80px; background: #ccc; }
.user { width: 80px; height: 80px; border-radius: 50%; background: #00c2b8; display: flex; align-items: center; justify-content: center; }

.stage { position: relative; height: 1406px; }
.wave { position: absolute; left: 0; top: 0; }
.ghost { position: absolute; left: 1400px; top: 442px; width: 900px; height: 942px; border-radius: 12px; background: #fcfcfc; padding: 214px 32px 0 0; }
.ghost i { display: block; height: 2px; background: #e2e2e2; margin-bottom: 448px; }
.ghost i:nth-child(2) { margin-bottom: 150px; }
.ghost i:nth-child(3) { margin-bottom: 69px; }
.tabs { position: relative; display: grid; grid-template-columns: 468px 135px 556px 370px auto; margin-left: 438px; height: 102px; font-size: 32px; font-weight: 700; line-height: 40px; letter-spacing: 1.05px; color: #f2f4f4; }
.tabs a { white-space: nowrap; margin-top: -11px; }
.tabs .on { width: 408px; height: 69px; border-bottom: 4px solid #0b0b4f; color: #0b0b4f; border-radius: 1px; }

.card {
  position: relative; width: 1580px; height: 1340px; margin-left: 561px; padding: 38px 62px 0; background: #fff;
  border-radius: 20px 20px 0 0; box-shadow: 0 0 110px rgba(0, 0, 0, .08);
}
.limit { font-size: 20px; line-height: 28px; letter-spacing: 1.92px; color: #949494; }
.field {
  width: 816px; height: 108px; margin: 36px 0 0 332px; padding: 0 4px 0 26px; border: 4px solid #0b0b4f; border-radius: 8px;
  display: flex; align-items: center; font-size: 28px; font-weight: 300; letter-spacing: .15px; color: #0b0b4f;
}
.field span { margin-left: 27px; }
.go { margin-left: auto; width: 92px; height: 92px; border-radius: 8px; background: #3e72ff; display: flex; align-items: center; justify-content: center; }
.terms { margin-top: 60px; line-height: 40px; font-size: 28px; letter-spacing: .03px; color: #949494; text-align: center; }
.terms a { color: #0b0b4f; }
.rule { height: 2px; background: #ccc; margin-top: 60px; }
h2 { margin-top: 60px; font-size: 32px; line-height: 40px; font-weight: 600; letter-spacing: 1.05px; color: #949494; }
.mail { margin-top: 20px; font-size: 36px; line-height: 44px; font-weight: 600; color: #0b0b4f; }
.score { margin-top: 50px; height: 60px; display: flex; justify-content: space-between; }
.score p { line-height: 60px; color: #949494; }
.score b { font-size: 48px; font-weight: 300; color: #17177a; }
.score span { font-size: 28px; font-weight: 300; letter-spacing: .4px; }
.lbl { display: flex; align-items: center; gap: 9px; height: 24px; margin-top: 33px; font-size: 24px; letter-spacing: 2.2px; color: #949494; }
.lbl i { width: 24px; height: 24px; border-radius: 50%; background: #0b0b4f; color: #fff; font: 800 17px/24px "Liberation Serif", serif; letter-spacing: 0; text-align: center; }
.bar { margin-top: 17px; height: 8px; background: #e6e6e6; border-radius: 4px; }
.fill { height: 8px; border-radius: 4px; background: #00c2b8; }
.safe { margin-top: 66px; height: 36px; display: flex; align-items: center; gap: 24px; font-size: 28px; font-weight: 600; color: #949494; }
.safe i { width: 36px; height: 36px; border-radius: 50%; background: #00c2b8; }
h3 { margin-top: 62px; font-size: 28px; line-height: 40px; font-weight: 600; letter-spacing: .6px; color: #0b0b4f; }
.profiles { margin-top: 58px; display: grid; grid-template-columns: repeat(12, 128.8px); row-gap: 42.3px; }
.profiles svg { width: 56px; height: 48px; fill: #cecece; stroke: none; color: #cecece; }
.profiles .a { fill: #00c2b8; color: #00c2b8; }
.profiles .b { fill: #60bdb2; color: #60bdb2; }
.s { fill: none; stroke: currentColor; }
.w { fill: none; stroke: #fff; stroke-linecap: round; }
.profiles .s { fill: none; }
.last { margin-top: 46px; }
.eb { font: 500 25px Inter, sans-serif; letter-spacing: -1.5px; }
.bk { font: 700 24px Inter, sans-serif; fill: #fff; }
.sm { font: 700 6.5px Inter, sans-serif; fill: #fff; }
.my { font: 300 40px "Open Sans", sans-serif; stroke: currentColor; stroke-width: .7; }
.tk { font: 700 13px Inter, sans-serif; }
.am { font: 700 45px "Open Sans", sans-serif; }
.jd { font: 500 40px Inter, sans-serif; }
.qu { font: 700 46px "Liberation Serif", serif; }

.scroll { width: 34px; background: #f1f1f1; display: flex; flex-direction: column; align-items: center; padding: 14px 0 14px; }
.thumb { width: 30px; height: 136px; margin-top: 89px; margin-bottom: auto; background: #c1c1c1; }

/* taskbar */
.taskbar {
  height: 80px; display: flex; font-family: "Open Sans", sans-serif; color: #111;
  background: linear-gradient(90deg, #f3e6e7 0, #efe2e2 96px, #e0d2d2 672px, #e2d3d3 900px, #e7d6d6 1300px, #e4d6d6 1600px, #e9d9d8 2000px, #e7d8db 2400px, #ecd8d5 2600px, #e8d6d6);
}
.start { width: 96px; display: flex; align-items: center; justify-content: center; }
.search { width: 576px; border: 2px solid #ccc; background: #fff; display: flex; align-items: center; padding-left: 22px; font-size: 29px; letter-spacing: -.6px; }
.search span { margin-left: 22px; margin-top: 3px; }
.search .art { margin-left: auto; margin-right: -2px; }
.tv { width: 102px; display: flex; align-items: center; padding-left: 32px; }
.apps { display: grid; grid-template-columns: repeat(7, 96px); column-gap: 2px; }
.app { display: flex; flex-direction: column; align-items: center; justify-content: center; border-bottom: 4px solid transparent; padding-top: 4px; position: relative; }
.app::after { content: ""; position: absolute; left: 8px; right: 8px; bottom: -4px; height: 4px; background: #409cff; }
.none::after { display: none; }
.active { background: #f4eeee; }
.active::after { left: 0; right: 0; }
.two::after { background: linear-gradient(90deg, #409cff 80%, #8cc4fb 80%); }
.tray {
  margin-left: auto; display: grid; align-items: center;
  grid-template-columns: 66px 115px 67px 58px 63px 67px 68px 58px 72px 70px 71px 151px 82px;
}
.k { fill: none; stroke: #111; stroke-width: 2.4; }
.tx { font-size: 27px; letter-spacing: -1px; white-space: nowrap; }
.deu { font-size: 25px; }
.clock { width: 113px; display: flex; flex-direction: column; align-items: center; font-size: 24px; line-height: 37px; letter-spacing: -1px; white-space: nowrap; }
.note { padding-top: 18px; }
.one { font: 20px "Open Sans", sans-serif; fill: #fff; }
.four { font: 24px "Open Sans", sans-serif; fill: #000; }
.wd { font: 700 24px "Open Sans", sans-serif; fill: #fff; }
```
